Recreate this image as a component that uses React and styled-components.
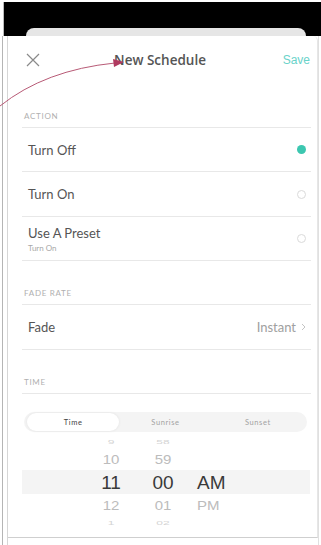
import React from "react";
import styled, { createGlobalStyle } from "styled-components";

const Global = createGlobalStyle`
  html, body { margin: 0; padding: 0; background: #fff; }
  body { width: 321px; height: 545px; overflow: hidden; font-family: "Lato", "Noto Sans", sans-serif; }
  * { box-sizing: border-box; }
`;

const Screen = styled.div`
  position: relative;
  width: 321px;
  height: 545px;
  display: flex;
  flex-direction: column;
  background: #fff;
  padding-top: 2px;
`;

const TopBar = styled.div`
  height: 34px;
  background: #000;
  display: flex;
  align-items: flex-end;
  padding: 0 15px 0 22px;
  border-left: 1px solid #bbb;
  margin-left: 3px;
`;

const BackCard = styled.div`
  flex: 1;
  height: 8px;
  background: #e6e6e6;
  border-radius: 8px 8px 0 0;
`;

const Body = styled.div`
  flex: 1;
  display: flex;
`;

const Gutter = styled.div`
  margin-left: 2px;
  border-left: 1px solid #b5b5b5;
  border-right: 1px solid #d6d6d6;
  width: 6px;
`;

const Sheet = styled.div`
  width: 310px;
  height: 502px;
  background: #fff;
  border-radius: 5px 5px 0 0;
  border-bottom: 1px solid #cfcfcf;
  border-right: 1px solid #e6e6e6;
  padding: 0 6px 0 14px;
  display: flex;
  flex-direction: column;
`;

const Header = styled.div`
  height: 48px;
  display: grid;
  grid-template-columns: 40px 1fr 40px;
  align-items: center;
  padding-right: 1px;
`;

const CloseBtn = styled.div`
  width: 16px;
  height: 16px;
  margin-left: 3px;
  display: flex;
`;

const Title = styled.div`
  font-family: "Open Sans", "Liberation Sans", sans-serif;
  font-size: 13.5px;
  font-weight: 600;
  color: #555;
  text-align: center;
  padding-right: 12px;
`;

const Save = styled.div`
  font-size: 12px;
  color: #6ad3ca;
  text-align: right;
  font-family: "Liberation Sans", Arial, sans-serif;
`;

const SectionLabel = styled.div`
  height: 44px;
  display: flex;
  align-items: flex-end;
  padding: 0 0 6px 2px;
  font-size: 8px;
  letter-spacing: 0.7px;
  color: #b0b0b0;
  text-transform: uppercase;
  border-bottom: 1px solid #e8e8e8;
`;

const Row = styled.div`
  height: ${(p) => p.$h || 44}px;
  display: flex;
  align-items: center;
  justify-content: space-between;
  padding: 0 5px 0 6px;
  border-bottom: 1px solid #e8e8e8;
`;

const RowText = styled.div`
  display: flex;
  flex-direction: column;
  gap: 2px;
`;

const Main = styled.div`
  font-size: 13px;
  color: #555;
`;

const Sub = styled.div`
  font-size: 8px;
  color: #a8a8a8;
`;

const Radio = styled.div`
  width: 9px;
  height: 9px;
  border-radius: 50%;
  background: ${(p) => (p.$on ? "#3cc7b0" : "transparent")};
  border: ${(p) => (p.$on ? "none" : "1px solid #dadada")};
`;

const Value = styled.div`
  display: flex;
  align-items: center;
  gap: 5px;
  font-size: 13px;
  color: #a0a0a0;
`;

const Segmented = styled.div`
  margin: 18px 4px 4px 2px;
  height: 20px;
  border-radius: 10px;
  background: #f4f4f4;
  display: grid;
  grid-template-columns: 1fr 1fr 1fr;
  padding: 1px 3px;
`;

const Seg = styled.div`
  border-radius: 9px;
  background: ${(p) => (p.$active ? "#fff" : "transparent")};
  box-shadow: ${(p) => (p.$active ? "0 0 3px rgba(0,0,0,0.08)" : "none")};
  display: flex;
  align-items: center;
  justify-content: center;
  font-size: 7.5px;
  letter-spacing: 0.6px;
  color: ${(p) => (p.$active ? "#444" : "#a3a3a3")};
`;

const Picker = styled.div`
  height: 94px;
  display: flex;
  flex-direction: column;
  overflow: hidden;
`;

const PickRow = styled.div`
  height: ${(p) => p.$h}px;
  flex: none;
  display: grid;
  grid-template-columns: 40px 40px 60px;
  column-gap: 12px;
  align-items: center;
  padding-left: 69px;
  background: ${(p) => (p.$sel ? "#f4f4f4" : "transparent")};
  margin-right: 1px;
  font-family: "Liberation Sans", Arial, sans-serif;
  font-size: ${(p) => p.$fs}px;
  color: ${(p) => p.$color};
`;

const Cell = styled.div`
  text-align: ${(p) => (p.$left ? "left" : "center")};
  padding-left: ${(p) => (p.$left ? "2px" : "0")};
  transform: scaleY(${(p) => p.$sy});
  line-height: 1;
`;

const RightEdge = styled.div`
  flex: 1;
  border-left: 1px solid #e0e0e0;
`;

const Annotation = styled.svg`
  position: absolute;
  left: 0;
  top: 0;
  pointer-events: none;
`;

const rows = [
  { h: 12, fs: 12, color: "#d4d4d4", sy: 0.45, v: ["9", "58", ""] },
  { h: 22, fs: 15, color: "#bcbcbc", sy: 0.9, v: ["10", "59", ""] },
  { h: 24, fs: 19, color: "#3a3a3a", sy: 1, v: ["11", "00", "AM"], sel: true },
  { h: 22, fs: 15, color: "#bcbcbc", sy: 0.9, v: ["12", "01", "PM"] },
  { h: 14, fs: 12, color: "#d4d4d4", sy: 0.45, v: ["1", "02", ""] },
];

export default function App() {
  return (
    <>
      <Global />
      <Screen>
        <TopBar>
          <BackCard />
        </TopBar>
        <Body>
          <Gutter />
          <Sheet>
            <Header>
              <CloseBtn>
                <svg width="16" height="16" viewBox="0 0 16 16">
                  <path d="M2 2 L14 14 M14 2 L2 14" stroke="#8a8a8a" strokeWidth="1.2" fill="none" />
                </svg>
              </CloseBtn>
              <Title>New Schedule</Title>
              <Save>Save</Save>
            </Header>

            <SectionLabel>Action</SectionLabel>
            <Row>
              <Main>Turn Off</Main>
              <Radio $on />
            </Row>
            <Row $h={45}>
              <Main>Turn On</Main>
              <Radio />
            </Row>
            <Row>
              <RowText>
                <Main>Use A Preset</Main>
                <Sub>Turn On</Sub>
              </RowText>
              <Radio />
            </Row>

            <SectionLabel>Fade Rate</SectionLabel>
            <Row $h={45}>
              <Main>Fade</Main>
              <Value>
                Instant
                <svg width="5" height="8" viewBox="0 0 5 8">
                  <path d="M1 1 L4 4 L1 7" stroke="#c4c4c4" strokeWidth="1" fill="none" />
                </svg>
              </Value>
            </Row>

            <SectionLabel>Time</SectionLabel>
            <Segmented>
              <Seg $active>Time</Seg>
              <Seg>Sunrise</Seg>
              <Seg>Sunset</Seg>
            </Segmented>
            <Picker>
              {rows.map((r, i) => (
                <PickRow key={i} $h={r.h} $fs={r.fs} $color={r.color} $sel={r.sel}>
                  <Cell $sy={r.sy}>{r.v[0]}</Cell>
                  <Cell $sy={r.sy}>{r.v[1]}</Cell>
                  <Cell $sy={r.sy} $left>{r.v[2]}</Cell>
                </PickRow>
              ))}
            </Picker>
          </Sheet>
          <RightEdge />
        </Body>
        <Annotation width="321" height="545" viewBox="0 0 321 545">
          <path d="M0 106 Q 45 70 115 63" stroke="#b85a76" strokeWidth="1" fill="none" />
          <path d="M113 59 L124 62 L114 67 Z" fill="#b03a60" />
        </Annotation>
      </Screen>
    </>
  );
}
